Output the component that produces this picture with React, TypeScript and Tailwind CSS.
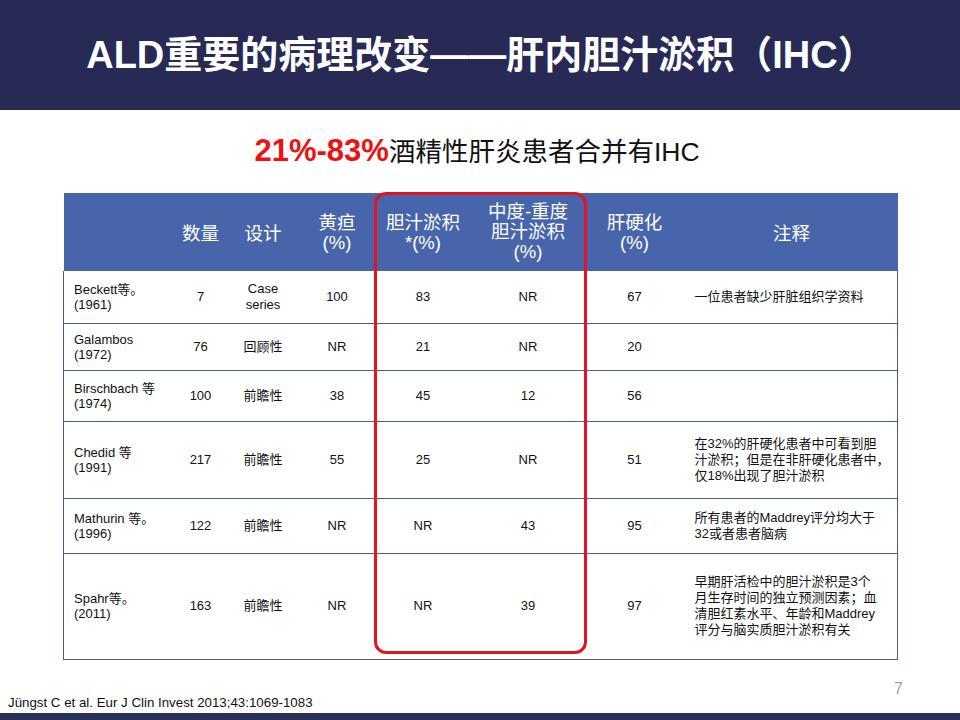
import React from "react";

const rows = [
  { name: ["Beckett等。", "(1961)"], n: "7", design: ["Case", "series"], jaundice: "100", chole: "83", severe: "NR", cirr: "67", note: ["一位患者缺少肝脏组织学资料"], h: "h-[52px]" },
  { name: ["Galambos", "(1972)"], n: "76", design: ["回顾性"], jaundice: "NR", chole: "21", severe: "NR", cirr: "20", note: [], h: "h-[47px]" },
  { name: ["Birschbach 等", "(1974)"], n: "100", design: ["前瞻性"], jaundice: "38", chole: "45", severe: "12", cirr: "56", note: [], h: "h-[51px]" },
  {
    name: ["Chedid 等", "(1991)"],
    n: "217",
    design: ["前瞻性"],
    jaundice: "55",
    chole: "25",
    severe: "NR",
    cirr: "51",
    note: ["在32%的肝硬化患者中可看到胆", "汁淤积；但是在非肝硬化患者中，", "仅18%出现了胆汁淤积"],
    h: "h-[77px]",
  },
  {
    name: ["Mathurin 等。", "(1996)"],
    n: "122",
    design: ["前瞻性"],
    jaundice: "NR",
    chole: "NR",
    severe: "43",
    cirr: "95",
    note: ["所有患者的Maddrey评分均大于", "32或者患者脑病"],
    h: "h-[55px]",
  },
  {
    name: ["Spahr等。", "(2011)"],
    n: "163",
    design: ["前瞻性"],
    jaundice: "NR",
    chole: "NR",
    severe: "39",
    cirr: "97",
    note: ["早期肝活检中的胆汁淤积是3个", "月生存时间的独立预测因素；血", "清胆红素水平、年龄和Maddrey", "评分与脑实质胆汁淤积有关"],
    h: "h-[106px]",
  },
];

const Lines = ({ lines }: { lines: string[] }) => (
  <>
    {lines.map((l, i) => (
      <div key={i} className="whitespace-nowrap">
        {l}
      </div>
    ))}
  </>
);

export default function App() {
  return (
    <div
      className="w-[960px] h-[720px] bg-white flex flex-col overflow-hidden"
      style={{ fontFamily: '"Liberation Sans", "Noto Sans CJK SC", sans-serif' }}
    >
      {/* title bar */}
      <div className="h-[110px] bg-[#262a55] flex items-center justify-center shrink-0">
        <h1 className="text-white font-bold text-[38px] leading-none pl-[2px]">
          ALD重要的病理改变——肝内胆汁淤积（IHC）
        </h1>
      </div>

      {/* subtitle */}
      <div className="h-[83px] flex items-center justify-center shrink-0 pb-[2px] pr-[6px]">
        <p className="leading-none text-[#111]">
          <span className="text-[#ee1111] font-bold text-[31px]">21%-83%</span>
          <span className="text-[26.5px]">酒精性肝炎患者合并有IHC</span>
        </p>
      </div>

      {/* table */}
      <div className="relative mx-auto w-[834px] shrink-0">
        <table className="table-fixed border-collapse w-[834px] text-[13px] text-[#111]">
          <colgroup>
            <col className="w-[112px]" />
            <col className="w-[50px]" />
            <col className="w-[75px]" />
            <col className="w-[73px]" />
            <col className="w-[99px]" />
            <col className="w-[111px]" />
            <col className="w-[102px]" />
            <col className="w-[212px]" />
          </colgroup>
          <thead>
            <tr className="h-[78px] bg-[#4865ab] text-white text-[18.5px] leading-[20px]">
              <th className="font-normal"></th>
              <th className="font-normal pt-[4px]">数量</th>
              <th className="font-normal pt-[4px]">设计</th>
              <th className="font-normal pt-[2px]">
                黄疸
                <br />
                (%)
              </th>
              <th className="font-normal pt-[2px]">
                胆汁淤积
                <br />
                *(%)
              </th>
              <th className="font-normal">
                中度-重度
                <br />
                胆汁淤积
                <br />
                (%)
              </th>
              <th className="font-normal pt-[2px]">
                肝硬化
                <br />
                (%)
              </th>
              <th className="font-normal pt-[4px]">注释</th>
            </tr>
          </thead>
          <tbody>
            {rows.map((r, i) => (
              <tr key={i} className={`${r.h} border-b border-x border-[#4b5a93]`}>
                <td className="pl-[10px] leading-[15px]">
                  <Lines lines={r.name} />
                </td>
                <td className="text-center">{r.n}</td>
                <td className="text-center leading-[16px]">
                  <Lines lines={r.design} />
                </td>
                <td className="text-center">{r.jaundice}</td>
                <td className="text-center">{r.chole}</td>
                <td className="text-center">{r.severe}</td>
                <td className="text-center">{r.cirr}</td>
                <td className="pl-[9px] leading-[16px]">
                  <Lines lines={r.note} />
                </td>
              </tr>
            ))}
          </tbody>
        </table>
        {/* red highlight box */}
        <div className="absolute left-[311px] top-[-1px] w-[213px] h-[462px] border-[3px] border-[#e3141c] rounded-[12px] pointer-events-none" />
      </div>

      {/* footer */}
      <div className="relative flex-1">
        <span className="absolute right-[57px] top-[17px] text-[16px] text-[#a0a0a0]">7</span>
        <span className="absolute left-[8px] bottom-[0px] text-[13.3px] text-[#111]">
          Jüngst C et al. Eur J Clin Invest 2013;43:1069-1083
        </span>
      </div>
      <div className="h-[7px] bg-[#27315a] shrink-0" />
    </div>
  );
}
